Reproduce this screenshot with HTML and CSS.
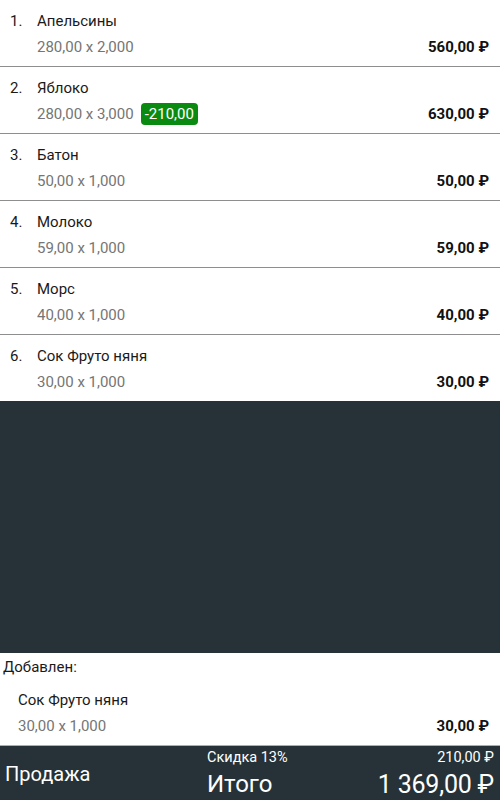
FILE: index.html
```html
<!DOCTYPE html>
<html lang="ru">
<head>
<meta charset="utf-8">
<title>Чек</title>
<link rel="stylesheet" href="styles.css">
</head>
<body>
<div class="screen">
  <div class="list">
    <div class="row">
      <span class="num">1.</span>
      <span class="name">Апельсины</span>
      <span class="qty">280,00 x 2,000</span>
      <span class="sum">560,00 ₽</span>
    </div>
    <div class="row">
      <span class="num">2.</span>
      <span class="name">Яблоко</span>
      <span class="qty">280,00 x 3,000 <span class="badge">-210,00</span></span>
      <span class="sum">630,00 ₽</span>
    </div>
    <div class="row">
      <span class="num">3.</span>
      <span class="name">Батон</span>
      <span class="qty">50,00 x 1,000</span>
      <span class="sum">50,00 ₽</span>
    </div>
    <div class="row">
      <span class="num">4.</span>
      <span class="name">Молоко</span>
      <span class="qty">59,00 x 1,000</span>
      <span class="sum">59,00 ₽</span>
    </div>
    <div class="row">
      <span class="num">5.</span>
      <span class="name">Морс</span>
      <span class="qty">40,00 x 1,000</span>
      <span class="sum">40,00 ₽</span>
    </div>
    <div class="row">
      <span class="num">6.</span>
      <span class="name">Сок Фруто няня</span>
      <span class="qty">30,00 x 1,000</span>
      <span class="sum">30,00 ₽</span>
    </div>
  </div>
  <div class="empty"></div>
  <div class="added">
    <div class="added-title">Добавлен:</div>
    <div class="added-item">
      <span class="name">Сок Фруто няня</span>
      <span class="qty">30,00 x 1,000</span>
      <span class="sum">30,00 ₽</span>
    </div>
  </div>
  <div class="footer">
    <div class="mode">Продажа</div>
    <div class="totals">
      <span class="disc-label">Скидка 13%</span>
      <span class="disc-value">210,00 ₽</span>
      <span class="total-label">Итого</span>
      <span class="total-value">1 369,00 ₽</span>
    </div>
  </div>
</div>
</body>
</html>
```

FILE: styles.css
```css
* { box-sizing: border-box; }
html, body {
  margin: 0;
  padding: 0;
}
body {
  font-family: Roboto, "Noto Sans", "Liberation Sans", sans-serif;
  color: #1a1a1a;
  background: #fff;
}
.screen {
  width: 500px;
  height: 800px;
  display: flex;
  flex-direction: column;
  overflow: hidden;
}
.list {
  display: flex;
  flex-direction: column;
}
.row {
  height: 67px;
  border-bottom: 1px solid #8e8e8e;
  display: grid;
  grid-template-columns: 27px 1fr auto;
  grid-template-rows: 18px 22px;
  row-gap: 6px;
  align-items: center;
  padding: 12px 11px 0 10px;
}
.row:last-child {
  height: 66px;
  border-bottom: none;
}
.num {
  grid-column: 1;
  grid-row: 1;
  font-size: 15px;
  color: #1a1a1a;
}
.row .name {
  grid-column: 2 / 4;
  grid-row: 1;
}
.name {
  font-size: 15px;
  color: #1a1a1a;
}
.row .qty {
  grid-column: 2;
  grid-row: 2;
}
.qty {
  font-size: 15px;
  color: #757575;
  display: flex;
  align-items: center;
  gap: 4px;
}
.row .sum {
  grid-column: 3;
  grid-row: 2;
}
.sum {
  font-size: 15px;
  font-weight: bold;
  color: #111;
  text-align: right;
}
.badge {
  background: #0b8a12;
  color: #fff;
  border-radius: 4px;
  padding: 0 4px;
  height: 22px;
  line-height: 22px;
  font-size: 15px;
  margin-left: 3px;
}
.empty {
  flex: 1;
  background: #263238;
}
.added {
  height: 92px;
  padding: 5px 11px 0 3px;
  display: flex;
  flex-direction: column;
}
.added-title {
  font-size: 15px;
  height: 18px;
  line-height: 18px;
  color: #1a1a1a;
}
.added-item {
  display: grid;
  grid-template-columns: 1fr auto;
  grid-template-rows: 18px 22px;
  row-gap: 6px;
  align-items: center;
  padding: 15px 0 0 15px;
}
.added-item .name { grid-column: 1 / 3; grid-row: 1; }
.added-item .qty { grid-column: 1; grid-row: 2; }
.added-item .sum { grid-column: 2; grid-row: 2; }
.footer {
  height: 55px;
  background: #263238;
  border-top: 1px solid #a9b0b3;
  display: flex;
  align-items: center;
  color: #fff;
}
.mode {
  font-size: 20px;
  padding-left: 5px;
  width: 207px;
  flex: none;
  margin-top: 2px;
}
.totals {
  flex: 1;
  display: grid;
  grid-template-columns: 1fr auto;
  grid-template-rows: 20px 34px;
  align-items: center;
  padding-right: 6px;
  align-self: stretch;
  padding-top: 1px;
}
.disc-label, .disc-value {
  font-size: 14.5px;
}
.disc-value {
  text-align: right;
}
.total-label {
  font-size: 24px;
}
.total-value {
  font-size: 25px;
  letter-spacing: -0.2px;
  text-align: right;
}
```
